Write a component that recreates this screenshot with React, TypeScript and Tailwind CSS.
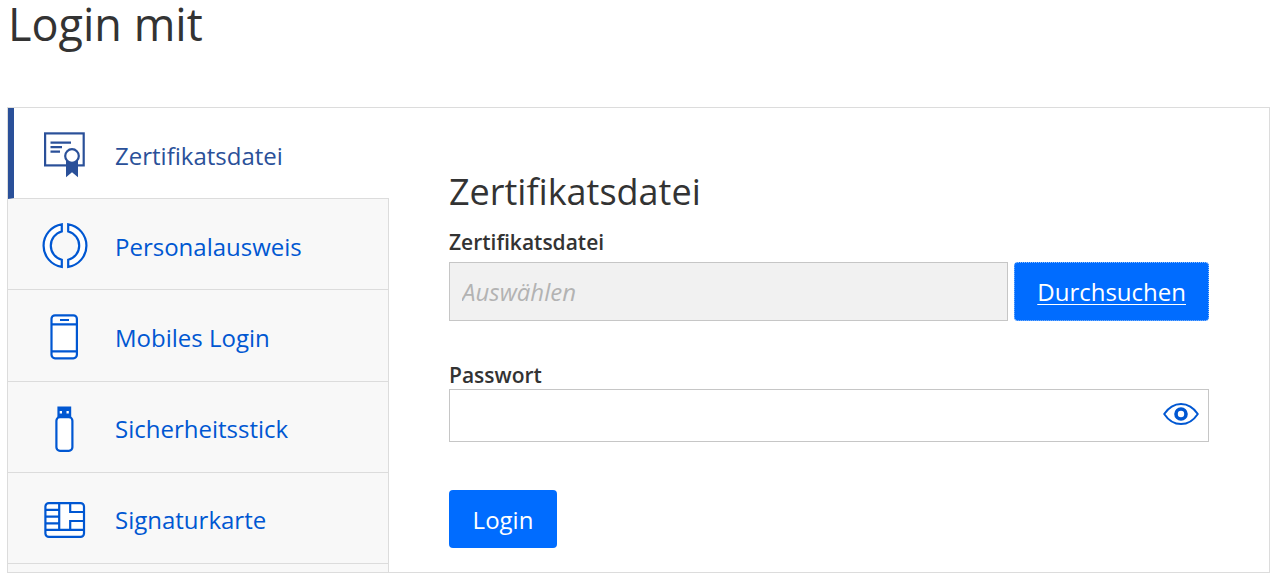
import { useState } from 'react'
import type { ReactNode } from 'react'
import clsx from 'clsx'

interface LoginMethod {
  id: string
  label: string
  icon: ReactNode
}

const methods: LoginMethod[] = [
  {
    id: 'zertifikatsdatei',
    label: 'Zertifikatsdatei',
    icon: (
      <>
        <rect x="5.1" y="2.4" width="38.6" height="32" />
        <path d="M10.5 11.6H31M10.5 16.1H22M10.5 20.6H20" />
        <path d="M26 30V46.3L32 41.3L38 46.3V30Z" fill="currentColor" stroke="none" />
        <circle cx="32" cy="25" r="6.8" />
      </>
    ),
  },
  {
    id: 'personalausweis',
    label: 'Personalausweis',
    icon: (
      <>
        <path d="M21.8 2.4A21.5 21.5 0 0 0 21.8 44.9V37.8A14.6 14.6 0 0 1 21.8 9.5Z" />
        <path d="M28.2 2.4A21.5 21.5 0 0 1 28.2 44.9V37.8A14.6 14.6 0 0 0 28.2 9.5Z" />
      </>
    ),
  },
  {
    id: 'mobil',
    label: 'Mobiles Login',
    icon: (
      <>
        <rect x="11.5" y="2.3" width="25.4" height="43" rx="3.5" />
        <path d="M11.5 11.4H36.9M11.5 38.4H36.9M20 7H29" />
      </>
    ),
  },
  {
    id: 'stick',
    label: 'Sicherheitsstick',
    icon: (
      <>
        <path d="M17.4 1.5H31.2V12.2H17.4Z" fill="currentColor" stroke="none" />
        <path d="M19.7 6.1H22V8.4H19.7ZM26.5 6.1H28.8V8.4H26.5Z" stroke="none" />
        <rect x="16.4" y="12.2" width="16" height="33.6" rx="3.5" />
      </>
    ),
  },
  {
    id: 'signaturkarte',
    label: 'Signaturkarte',
    icon: (
      <>
        <rect x="5.4" y="7.1" width="38.6" height="33.8" rx="3.5" />
        <path d="M5.4 33.8H44M19.2 7.1V33.8M5.4 13.8H19.2M5.4 20.7H19.2M5.4 27.3H19.2" />
        <path d="M30.2 7.1V16H44M44 25H30.2V33.8" fill="none" />
      </>
    ),
  },
]

function EyeIcon() {
  return (
    <svg viewBox="0 0 36 24" className="w-9 h-6" fill="none" stroke="currentColor" aria-hidden="true">
      <path d="M1.2 12C5.5 5.5 11 1.9 18 1.9S30.5 5.5 34.8 12C30.5 18.5 25 22.1 18 22.1S5.5 18.5 1.2 12Z" strokeWidth="2" strokeLinejoin="round" />
      <circle cx="18" cy="12" r="5" strokeWidth="3.6" />
    </svg>
  )
}

export default function App() {
  const [active, setActive] = useState('zertifikatsdatei')
  const [showPassword, setShowPassword] = useState(false)

  return (
    <main className="bg-white pl-[7px] pr-[5px] pb-[3px] text-[#333333] font-['Open_Sans','Noto_Sans',sans-serif]">
      <h1 className="pl-px text-[45px] leading-12 pb-[59px]">Login mit</h1>

      <div className="flex border border-[#dcdcdc]">
        <nav className="flex flex-col w-[381px] shrink-0" aria-label="Login-Verfahren">
          <ul className="grid grid-rows-5 h-[456px]">
            {methods.map(m => (
              <li key={m.id} className="flex">
                <a
                  href={`#${m.id}`}
                  onClick={() => setActive(m.id)}
                  aria-current={m.id === active ? 'page' : undefined}
                  className={clsx(
                    'flex flex-1 items-center gap-[26px] pt-1 border-b border-b-[#dcdcdc] text-2xl',
                    m.id === active
                      ? 'border-l-6 border-l-[#2a5099] pl-[26px] bg-white text-[#2a5099]'
                      : 'border-r border-r-[#dcdcdc] pl-8 bg-[#f8f8f8] text-[#0057d2]',
                  )}
                >
                  <svg viewBox="0 0 48 48" className="size-12 shrink-0" fill="white" stroke="currentColor" strokeWidth="2.2" aria-hidden="true">
                    {m.icon}
                  </svg>
                  <span className="pt-px pl-px">{m.label}</span>
                </a>
              </li>
            ))}
          </ul>
          <div className="flex-1 border-r border-[#dcdcdc] bg-[#f8f8f8]" />
        </nav>

        <form className="flex-1 min-w-0 px-[60px] pt-[60px] pb-6" onSubmit={e => e.preventDefault()}>
          <h2 className="text-4xl leading-12">Zertifikatsdatei</h2>

          <label htmlFor="datei" className="block mt-3 text-[21px] leading-7 font-semibold">Zertifikatsdatei</label>
          <div className="flex gap-1.5 mt-1.5">
            <input
              id="datei"
              type="text"
              readOnly
              placeholder="Auswählen"
              className="flex-1 min-w-0 h-[59px] px-3 border border-[#c6c6c6] bg-[#f1f1f1] text-2xl placeholder:italic placeholder:text-[#b3b3b3]"
            />
            <button type="button" className="px-[22px] rounded border border-dotted border-[#8fc0ff] bg-[#006cff] text-2xl text-white underline decoration-1 underline-offset-3">
              Durchsuchen
            </button>
          </div>

          <label htmlFor="passwort" className="block mt-10 text-[21px] leading-7 font-semibold">Passwort</label>
          <div className="relative">
            <input
              id="passwort"
              type={showPassword ? 'text' : 'password'}
              className="block w-full h-[53px] pl-3 pr-14 border border-[#c6c6c6] bg-white text-2xl"
            />
            <button
              type="button"
              aria-label="Passwort anzeigen"
              onClick={() => setShowPassword(!showPassword)}
              className="absolute inset-y-0 right-0 flex items-center pr-2.5 pb-1 text-[#0057d2]"
            >
              <EyeIcon />
            </button>
          </div>

          <button type="submit" className="mt-12 h-[58px] w-27 pt-0.5 rounded bg-[#006cff] text-2xl text-white">
            Login
          </button>
        </form>
      </div>
    </main>
  )
}
